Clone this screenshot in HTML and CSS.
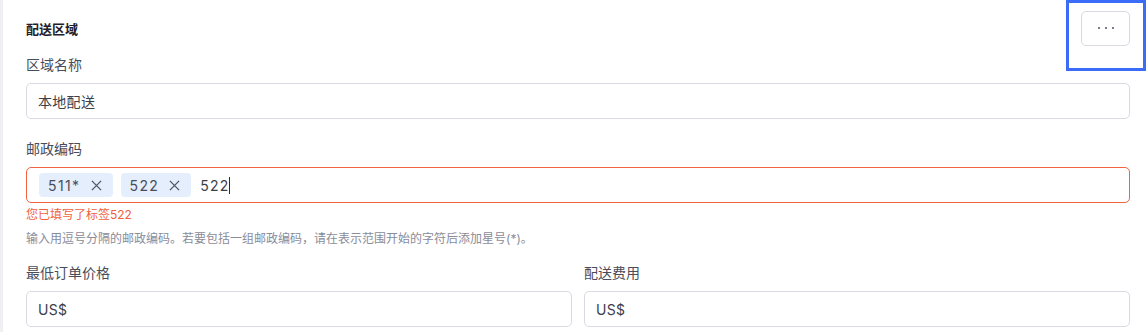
FILE: index.html
```html
<!DOCTYPE html>
<html lang="zh-CN">
<head>
<meta charset="utf-8">
<link rel="stylesheet" href="styles.css">
</head>
<body>
<div class="page">
  <div class="header">
    <h2 class="title">配送区域</h2>
    <button class="more" type="button" aria-label="更多"><span></span><span></span><span></span></button>
  </div>
  <div class="focus-ring"></div>

  <div class="field">
    <label class="label">区域名称</label>
    <div class="input">本地配送</div>
  </div>

  <div class="field">
    <label class="label">邮政编码</label>
    <div class="input tags error">
      <span class="tag"><span class="tag-text">511*</span><svg class="x" viewBox="0 0 12 12"><path d="M1 1L11 11M11 1L1 11"/></svg></span>
      <span class="tag"><span class="tag-text">522</span><svg class="x" viewBox="0 0 12 12"><path d="M1 1L11 11M11 1L1 11"/></svg></span>
      <span class="typed">522</span><span class="caret"></span>
    </div>
    <div class="err">您已填写了标签522</div>
    <div class="help">输入用逗号分隔的邮政编码。若要包括一组邮政编码，请在表示范围开始的字符后添加星号(*)。</div>
  </div>

  <div class="cols">
    <div class="field">
      <label class="label">最低订单价格</label>
      <div class="input">US$</div>
    </div>
    <div class="field">
      <label class="label">配送费用</label>
      <div class="input">US$</div>
    </div>
  </div>
</div>
</body>
</html>
```

FILE: styles.css
```css
* { box-sizing: border-box; }
html, body { margin: 0; padding: 0; background: #fff; }
body {
  font-family: "Inter", "Noto Sans CJK SC", sans-serif;
  color: #4a4c59;
  width: 1146px;
  height: 332px;
  overflow: hidden;
}
.page {
  position: relative;
  border-left: 3px solid #eef0f4;
  padding: 11px 16px 0 23px;
  height: 332px;
}
.header {
  display: flex;
  justify-content: space-between;
  align-items: center;
  height: 35px;
}
.title {
  margin: 0;
  font-size: 13px;
  font-weight: 700;
  color: #1f2029;
  line-height: 20px;
}
.more {
  width: 49px;
  height: 35px;
  border: 1px solid #d9dae2;
  border-radius: 5px;
  background: #fff;
  display: flex;
  align-items: center;
  justify-content: center;
  gap: 5px;
  padding: 0 0 2px 0;
}
.more span {
  width: 2px;
  height: 2px;
  border-radius: 50%;
  background: #4d5266;
}
.focus-ring {
  position: absolute;
  left: 1063px;
  top: 0;
  width: 80px;
  height: 71px;
  border: 3px solid #3a6cf8;
}
.field { display: flex; flex-direction: column; }
.header + .focus-ring + .field { margin-top: 9px; }
.field + .field { margin-top: 20px; }
.label {
  font-size: 14px;
  line-height: 20px;
  color: #4a4c59;
  margin-bottom: 8px;
}
.input {
  height: 36px;
  border: 1px solid #d9dae2;
  border-radius: 5px;
  padding: 0 11px;
  display: flex;
  align-items: center;
  font-size: 14px;
  color: #3c3e4a;
  letter-spacing: 0.3px;
}
.tags { padding-left: 12px; gap: 8px; }
.tags.error { border-color: #f0643f; }
.tag {
  display: inline-flex;
  align-items: center;
  height: 24px;
  padding: 0 11px 0 9px;
  background: #e4eefc;
  border-radius: 4px;
  font-size: 14px;
  color: #4a4c59;
  gap: 10px;
}
.tag-text { letter-spacing: 1.4px; }
.x {
  width: 11px;
  height: 11px;
  fill: none;
  stroke: #50535f;
  stroke-width: 1.4;
}
.typed { margin-left: 1px; color: #3c3e4a; letter-spacing: 1.2px; }
.caret {
  width: 1px;
  height: 17px;
  background: #2a2c35;
  margin-left: -9px;
}
.err {
  margin-top: 4px;
  font-size: 12px;
  line-height: 16px;
  color: #f0603d;
}
.help {
  margin-top: 8px;
  font-size: 12px;
  line-height: 16px;
  color: #8a8c99;
}
.cols {
  display: grid;
  grid-template-columns: 1fr 1fr;
  gap: 12px;
  margin-top: 16px;
}
.cols .field + .field { margin-top: 0; }
```
